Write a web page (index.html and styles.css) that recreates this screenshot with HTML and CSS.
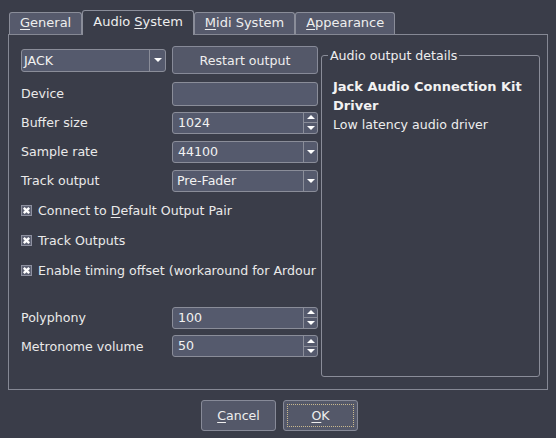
FILE: index.html
```html
<!DOCTYPE html>
<html>
<head>
<meta charset="utf-8">
<link rel="stylesheet" href="styles.css">
</head>
<body>
<div class="dialog">
  <div class="tabs">
    <div class="tab"><u>G</u>eneral</div>
    <div class="tab active">Audio <u>S</u>ystem</div>
    <div class="tab"><u>M</u>idi System</div>
    <div class="tab"><u>A</u>ppearance</div>
  </div>
  <div class="pane">
    <div class="left">
      <div class="row first">
        <div class="combo wide"><span class="ctext jack">JACK</span><span class="cbtn"><i class="down"></i></span></div>
        <div class="btn restart">Restart output</div>
      </div>
      <div class="row">
        <span class="label">Device</span>
        <div class="entry"></div>
      </div>
      <div class="row">
        <span class="label">Buffer size</span>
        <div class="spin"><span class="ctext">1024</span><span class="sbtns"><span><i class="up"></i></span><span><i class="down"></i></span></span></div>
      </div>
      <div class="row">
        <span class="label">Sample rate</span>
        <div class="combo"><span class="ctext">44100</span><span class="cbtn"><i class="down"></i></span></div>
      </div>
      <div class="row">
        <span class="label">Track output</span>
        <div class="combo"><span class="ctext pf">Pre-Fader</span><span class="cbtn"><i class="down"></i></span></div>
      </div>
      <div class="row check">
        <svg class="cb" width="11" height="11" viewBox="0 0 11 11"><rect x="0.5" y="0.5" width="10" height="10" class="cbbox"/><path d="M2.8 2.8L8.2 8.2M8.2 2.8L2.8 8.2" class="cbx"/></svg>
        <span class="label">Connect to <u>D</u>efault Output Pair</span>
      </div>
      <div class="row check">
        <svg class="cb" width="11" height="11" viewBox="0 0 11 11"><rect x="0.5" y="0.5" width="10" height="10" class="cbbox"/><path d="M2.8 2.8L8.2 8.2M8.2 2.8L2.8 8.2" class="cbx"/></svg>
        <span class="label">Track Outputs</span>
      </div>
      <div class="row check">
        <svg class="cb" width="11" height="11" viewBox="0 0 11 11"><rect x="0.5" y="0.5" width="10" height="10" class="cbbox"/><path d="M2.8 2.8L8.2 8.2M8.2 2.8L2.8 8.2" class="cbx"/></svg>
        <span class="label clip">Enable timing offset (workaround for Ardour</span>
      </div>
      <div class="row gapped">
        <span class="label">Polyphony</span>
        <div class="spin"><span class="ctext">100</span><span class="sbtns"><span><i class="up"></i></span><span><i class="down"></i></span></span></div>
      </div>
      <div class="row last">
        <span class="label">Metronome volume</span>
        <div class="spin"><span class="ctext">50</span><span class="sbtns"><span><i class="up"></i></span><span><i class="down"></i></span></span></div>
      </div>
    </div>
    <fieldset class="group">
      <legend>Audio output details</legend>
      <div class="gtitle">Jack Audio Connection Kit Driver</div>
      <div class="gdesc">Low latency audio driver</div>
    </fieldset>
  </div>
  <div class="buttons">
    <div class="btn dlg"><u>C</u>ancel</div>
    <div class="btn dlg ok"><span class="focus"><u>O</u>K</span></div>
  </div>
</div>
</body>
</html>
```

FILE: styles.css
```css
html, body {
  margin: 0;
  padding: 0;
}
body {
  width: 556px;
  height: 438px;
  overflow: hidden;
  background: #3a3d49;
  color: #eeeeee;
  font-family: "DejaVu Sans", sans-serif;
  font-size: 12.6px;
}
u {
  text-decoration: underline;
  text-underline-offset: 2px;
}
.tabs {
  display: flex;
  align-items: flex-start;
  height: 25px;
  margin: 10px 0 0 9px;
  position: relative;
  z-index: 1;
}
.tab {
  box-sizing: border-box;
  height: 22px;
  margin-top: 2px;
  padding: 0 10px;
  font-size: 13px;
  line-height: 20px;
  border: 1px solid #8a8d99;
  border-bottom: none;
  border-radius: 3px 3px 0 0;
  background: #565a6c;
  color: #eeeeee;
}
.tab.active {
  height: 25px;
  margin-top: 0;
  line-height: 22px;
  background: #3a3d49;
}
.pane {
  box-sizing: border-box;
  height: 356px;
  margin: -1px 8px 0;
  border: 1px solid #858894;
  display: flex;
  align-items: flex-start;
  padding: 10px 7px 0 12px;
}
.left {
  width: 297px;
  margin-right: 3px;
  flex: none;
}
.row {
  display: flex;
  align-items: center;
  justify-content: space-between;
  height: 29px;
}
.row.first {
  height: 30px;
  margin-bottom: 4px;
}
.row.check {
  height: 30px;
  justify-content: flex-start;
  gap: 6px;
}
.row.gapped {
  margin-top: 18px;
}
.row.last {
  height: 28px;
}
.label {
  color: #eaeaea;
  white-space: nowrap;
}
.label.clip {
  overflow: hidden;
  width: 280px;
}
.combo, .spin, .entry {
  box-sizing: border-box;
  width: 146px;
  height: 22px;
  border: 1px solid #8a8d99;
  border-radius: 3px;
  background: #555a6d;
  display: flex;
}
.entry {
  height: 24px;
}
.combo.wide {
  width: 145px;
  height: 23px;
}
.ctext {
  flex: 1;
  padding-left: 5px;
  line-height: 20px;
  color: #f2f2f2;
}
.ctext.pf {
  padding-left: 4px;
}
.ctext.jack {
  padding-left: 2px;
  line-height: 21px;
}
.cbtn {
  width: 13px;
  border-left: 1px solid #8a8d99;
  display: flex;
  align-items: center;
  justify-content: center;
}
.combo.wide .cbtn {
  width: 15px;
}
.sbtns {
  width: 13px;
  border-left: 1px solid #8a8d99;
  display: flex;
  flex-direction: column;
}
.sbtns span {
  flex: 1;
  display: flex;
  align-items: center;
  justify-content: center;
}
.sbtns span + span {
  border-top: 1px solid #8a8d99;
}
.up, .down {
  display: block;
  width: 0;
  height: 0;
  border-left: 4px solid transparent;
  border-right: 4px solid transparent;
}
.up {
  border-bottom: 4px solid #ffffff;
}
.down {
  border-top: 4px solid #ffffff;
}
.btn {
  box-sizing: border-box;
  border: 1px solid #878a98;
  border-radius: 3px;
  background: #545869;
  color: #eeeeee;
  display: flex;
  align-items: center;
  justify-content: center;
}
.btn.restart {
  width: 146px;
  height: 28px;
}
.cb {
  flex: none;
  display: block;
}
.cbbox {
  fill: #5c6072;
  stroke: #8e91a0;
  stroke-width: 1;
}
.cbx {
  stroke: #ffffff;
  stroke-width: 2.4;
  fill: none;
}
.group {
  box-sizing: border-box;
  width: 220px;
  height: 329px;
  margin: 3px 0 0;
  padding: 14px 8px 0 11px;
  border: 1px solid #8a8d99;
  border-radius: 3px;
  min-width: 0;
}
.group legend {
  padding: 0 2px;
  margin-left: -5px;
  line-height: 15px;
  color: #eeeeee;
}
.gtitle {
  font-weight: bold;
  font-size: 13px;
  line-height: 19px;
  color: #f2f2f2;
}
.gdesc {
  line-height: 19px;
  color: #eeeeee;
}
.buttons {
  display: flex;
  justify-content: center;
  gap: 7px;
  margin: 10px 0 0 3px;
}
.btn.dlg {
  width: 75px;
  height: 31px;
}
.btn.ok {
  padding: 3px;
}
.focus {
  box-sizing: border-box;
  width: 100%;
  height: 100%;
  border: 1px dotted #c9b98e;
  display: flex;
  align-items: center;
  justify-content: center;
}
```
